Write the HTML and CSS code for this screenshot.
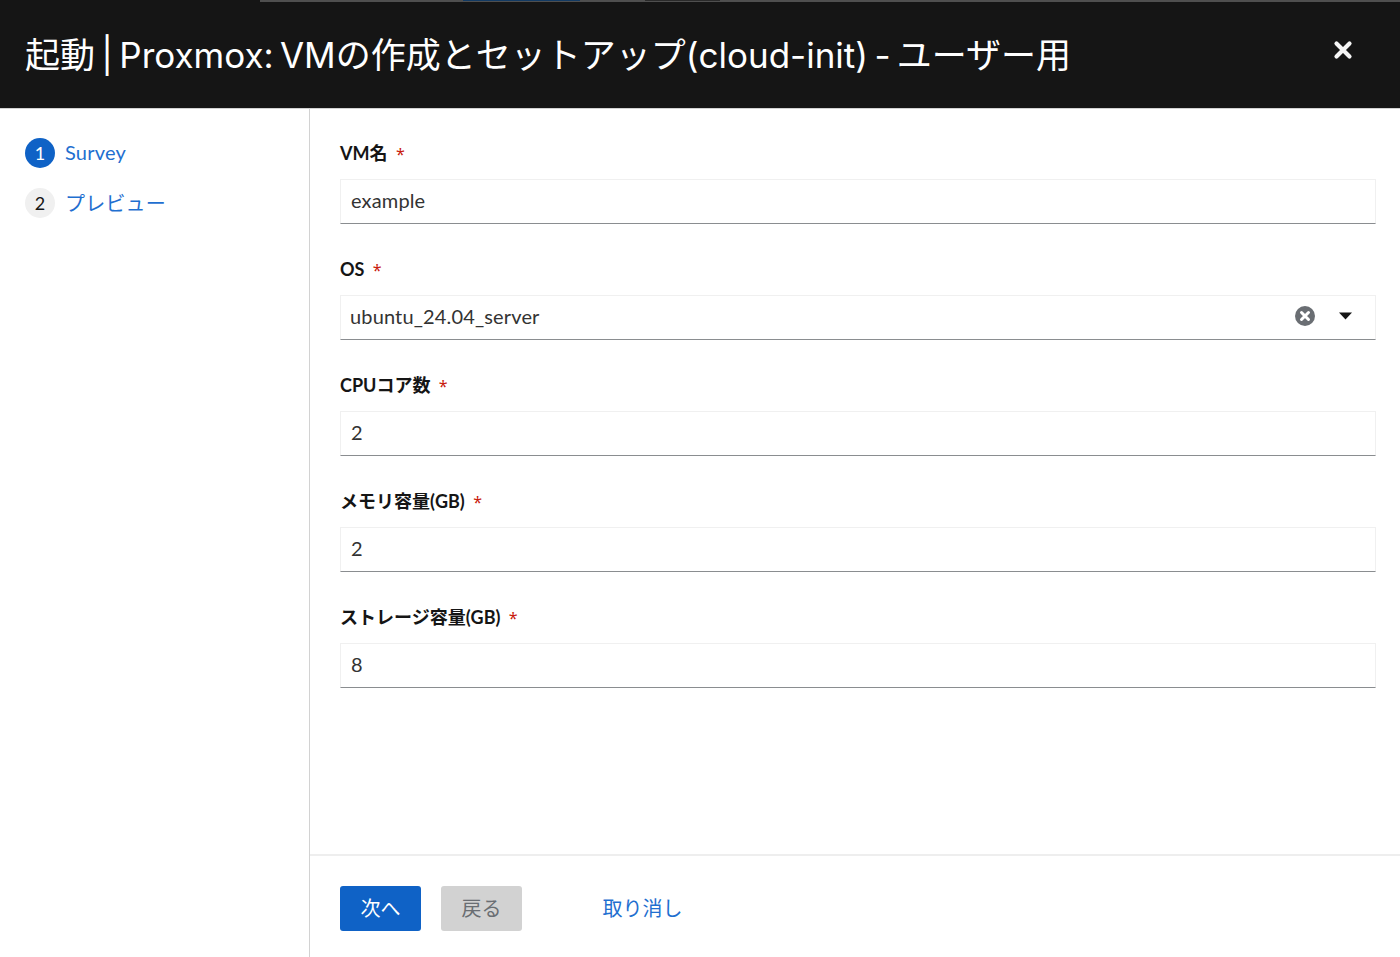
FILE: index.html
```html
<!DOCTYPE html>
<html lang="ja">
<head>
    <meta charset="UTF-8">
    <meta name="viewport" content="width=device-width, initial-scale=1.0">
    <title>起動 | Proxmox</title>
    <link rel="stylesheet" href="styles.css">
</head>
<body>

    <div class="top-strip">
        <div class="top-strip-bar">
            <span class="strip-link"></span>
            <span class="strip-text"></span>
        </div>
    </div>

    <header class="modal-header">
        <h1>起動 | Proxmox: VMの作成とセットアップ(cloud-init) - ユーザー用</h1>
        <button class="close-button" aria-label="閉じる">
            <svg width="20" height="20" viewBox="0 0 20 20"><path d="M3.5 3.5 L16.5 16.5 M16.5 3.5 L3.5 16.5" stroke="#f5f5f5" stroke-width="4.2" stroke-linecap="round"/></svg>
        </button>
    </header>

    <div class="wizard">
        <nav class="steps">
            <div class="step">
                <span class="step-number step-current">1</span>
                <span class="step-name">Survey</span>
            </div>
            <div class="step">
                <span class="step-number">2</span>
                <span class="step-name">プレビュー</span>
            </div>
        </nav>

        <main class="wizard-main">
            <form class="form">
                <div class="field">
                    <label>VM名 <span class="required">*</span></label>
                    <input type="text" value="example">
                </div>
                <div class="field">
                    <label>OS <span class="required">*</span></label>
                    <div class="select">
                        <span class="select-value">ubuntu_24.04_server</span>
                        <svg class="select-clear" width="20" height="20" viewBox="0 0 20 20">
                            <circle cx="10" cy="10" r="10" fill="#6a6e73"/>
                            <path d="M6.5 6.5 L13.5 13.5 M13.5 6.5 L6.5 13.5" stroke="#fff" stroke-width="3" stroke-linecap="round"/>
                        </svg>
                        <svg class="select-caret" width="13" height="8" viewBox="0 0 13 8"><path d="M0 .5 H13 L6.5 7.5 Z" fill="#151515"/></svg>
                    </div>
                </div>
                <div class="field">
                    <label>CPUコア数 <span class="required">*</span></label>
                    <input type="text" value="2">
                </div>
                <div class="field">
                    <label>メモリ容量(GB) <span class="required">*</span></label>
                    <input type="text" value="2">
                </div>
                <div class="field">
                    <label>ストレージ容量(GB) <span class="required">*</span></label>
                    <input type="text" value="8">
                </div>
            </form>

            <footer class="wizard-footer">
                <button class="btn btn-primary">次へ</button>
                <button class="btn btn-disabled">戻る</button>
                <button class="btn btn-link">取り消し</button>
            </footer>
        </main>
    </div>

</body>
</html>
```

FILE: styles.css
```css
* {
    box-sizing: border-box;
}

html, body {
    height: 100%;
}

body {
    margin: 0;
    font-family: Lato, "Noto Sans CJK JP", sans-serif;
    font-size: 20px;
    color: #151515;
    background-color: #fff;
    display: flex;
    flex-direction: column;
    overflow: hidden;
}

/* dimmed page peeking above the modal */
.top-strip {
    height: 2px;
    background-color: #151515;
    padding-left: 260px;
}

.top-strip-bar {
    height: 2px;
    background-color: #4f4f4f;
    display: flex;
}

.strip-link {
    width: 117px;
    height: 1px;
    margin-left: 203px;
    background-color: #123a63;
}

.strip-text {
    width: 75px;
    height: 1px;
    margin-left: 65px;
    background-color: #2a2a2a;
}

.modal-header {
    height: 107px;
    background-color: #151515;
    border-bottom: 1px solid #d2d2d2;
    color: #fff;
    display: flex;
    align-items: center;
    justify-content: space-between;
    padding: 0 47px 6px 25px;
}

.modal-header h1 {
    margin: 0;
    font-family: Inter, "Noto Sans CJK JP", sans-serif;
    font-size: 35px;
    font-weight: 400;
    letter-spacing: 0;
    word-spacing: -3.5px;
    white-space: nowrap;
}

.close-button {
    background: none;
    border: none;
    padding: 0;
    display: flex;
    margin-bottom: 5px;
}

.wizard {
    flex: 1;
    display: flex;
    min-height: 0;
}

.steps {
    width: 310px;
    flex-shrink: 0;
    border-right: 1px solid #d2d2d2;
    padding: 29px 25px;
    display: flex;
    flex-direction: column;
    gap: 20px;
}

.step {
    display: flex;
    align-items: center;
    gap: 10px;
    height: 30px;
}

.step-number {
    width: 30px;
    height: 30px;
    border-radius: 50%;
    background-color: #f0f0f0;
    display: flex;
    align-items: center;
    justify-content: center;
    font-size: 18px;
}

.step-current {
    background-color: #0f62c6;
    color: #fff;
}

.step-name {
    color: #1f6fd0;
    padding-bottom: 2px;
    letter-spacing: 0.2px;
}

.wizard-main {
    flex: 1;
    min-width: 0;
    display: flex;
    flex-direction: column;
}

.form {
    flex: 1;
    padding: 30px 24px 0 30px;
    display: flex;
    flex-direction: column;
    gap: 31px;
}

.field label {
    display: block;
    height: 30px;
    margin-bottom: 10px;
    line-height: 28px;
    font-size: 18px;
    font-weight: 700;
}

.required {
    font-family: "Noto Sans", sans-serif;
    font-size: 16px;
    color: #c9190b;
    font-weight: 400;
    margin-left: 4px;
}

.field input, .select {
    width: 100%;
    height: 45px;
    border: 1px solid #f0f0f0;
    border-bottom: 1px solid #8a8d90;
    background-color: #fff;
    font-family: inherit;
    font-size: 20px;
    letter-spacing: 0.15px;
    color: #333;
}

.field input {
    padding: 0 10px 3px;
}

.select {
    display: flex;
    align-items: center;
    padding: 0 23px 3px 9px;
}

.select-value {
    flex: 1;
}

.select-caret {
    margin-left: 24px;
}

.wizard-footer {
    height: 103px;
    flex-shrink: 0;
    border-top: 2px solid #eee;
    padding: 30px;
    display: flex;
    gap: 20px;
}

.btn {
    width: 81px;
    height: 45px;
    border: none;
    border-radius: 3px;
    font-family: inherit;
    font-size: 20px;
    padding: 0 0 2px;
}

.btn-primary {
    background-color: #0f62c6;
    color: #fff;
}

.btn-disabled {
    background-color: #d2d2d2;
    color: #6a6e73;
}

.btn-link {
    background: none;
    color: #1f6fd0;
    margin-left: 60px;
}
```
